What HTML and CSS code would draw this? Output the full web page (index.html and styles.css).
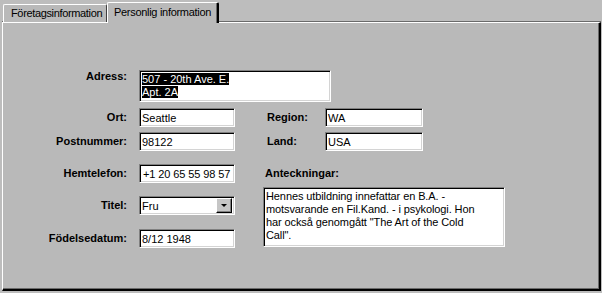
FILE: index.html
```html
<!DOCTYPE html>
<html>
<head>
    <meta charset="utf-8">
    <title>Personlig information</title>
    <link rel="stylesheet" href="styles.css">
</head>
<body>
<div class="tabs">
    <div class="tab">Företagsinformation</div>
    <div class="tab active">Personlig information</div>
</div>
<div class="panel">
    <div class="form">
        <div class="lbl r1">Adress:</div>
        <div class="edit area adress">
            <span class="sel">507 - 20th Ave. E.</span><br>
            <span class="sel">Apt. 2A</span>
        </div>

        <div class="lbl r2">Ort:</div>
        <div class="edit c3 r2">Seattle</div>
        <div class="lbl2 r2">Region:</div>
        <div class="edit c6 r2">WA</div>

        <div class="lbl r3">Postnummer:</div>
        <div class="edit c3 r3">98122</div>
        <div class="lbl2 r3">Land:</div>
        <div class="edit c6 r3">USA</div>

        <div class="lbl r4">Hemtelefon:</div>
        <div class="edit c3 r4 phone">+1 20 65 55 98 57</div>
        <div class="lbl2 notes-lbl r4">Anteckningar:</div>

        <div class="lbl r5 titel-lbl">Titel:</div>
        <div class="edit combo c3 r5">
            <span>Fru</span>
            <span class="drop"><i></i></span>
        </div>
        <div class="edit area notes">Hennes utbildning innefattar en B.A. -<br>motsvarande en Fil.Kand. - i psykologi. Hon<br>har också genomgått "The Art of the Cold<br>Call".</div>

        <div class="lbl r6">Födelsedatum:</div>
        <div class="edit c3 r6">8/12 1948</div>
    </div>
</div>
</body>
</html>
```

FILE: styles.css
```css
html, body {
    margin: 0;
    padding: 0;
}

body {
    width: 602px;
    height: 293px;
    overflow: hidden;
    background: #bdbdbd;
    color: #000;
    font: 11px/13px "Liberation Sans", Arial, sans-serif;
}

.tabs {
    display: flex;
    align-items: flex-end;
    height: 22px;
    padding-left: 3px;
    box-sizing: border-box;
}

.tab {
    box-sizing: border-box;
    height: 18px;
    width: 104px;
    padding: 2px 0 0 7px;
    background: #b9b9b9;
    border-top: 1px solid #fff;
    border-left: 1px solid #fff;
    border-right: 1px solid #404040;
    border-radius: 2px 2px 0 0;
    white-space: nowrap;
    letter-spacing: -0.35px;
    overflow: hidden;
}

.tab.active {
    position: relative;
    z-index: 1;
    width: 112px;
    height: 21px;
    margin-bottom: -1px;
    padding: 3px 0 0 6px;
    border-right: 2px solid #000;
    box-shadow: inset -1px 0 #6a6a6a;
    letter-spacing: -0.3px;
}

.panel {
    box-sizing: border-box;
    margin-left: 2px;
    width: 599px;
    height: 269px;
    background: #b9b9b9;
    border-top: 1px solid #fff;
    border-left: 1px solid #fff;
    border-right: 2px solid #000;
    border-bottom: 2px solid #000;
    box-shadow: inset -1px -1px #6a6a6a, 0 -1px #6a6a6a;
}

.form {
    display: grid;
    grid-template-columns: 124px 12px 96px 28px 62px 98px 82px;
    grid-template-rows: 38px 24px 32px 23px 42px 19px;
    padding-top: 47px;
    align-items: start;
}

.lbl, .lbl2 {
    font-weight: bold;
    line-height: 19px;
    white-space: nowrap;
}

.lbl {
    grid-column: 1;
    text-align: right;
}

.lbl.r1 {
    line-height: 13px;
}

.titel-lbl {
    margin-top: 9px;
}

.lbl2 {
    grid-column: 5;
    padding-left: 4px;
}

.notes-lbl {
    grid-column: 5 / span 2;
    padding-left: 2px;
}

.r1 { grid-row: 1; }
.r2 { grid-row: 2; }
.r3 { grid-row: 3; }
.r4 { grid-row: 4; }
.r5 { grid-row: 5; }
.r6 { grid-row: 6; }
.c3 { grid-column: 3; }
.c6 { grid-column: 6; }

.edit {
    box-sizing: border-box;
    height: 19px;
    background: #fff;
    border: 1px solid;
    border-color: #808080 #fff #fff #808080;
    box-shadow: inset 1px 1px #000, inset -1px -1px #d4d4d4;
    padding: 2px 2px 0 2px;
    line-height: 14px;
    white-space: nowrap;
    overflow: hidden;
}

.phone {
    letter-spacing: -0.1px;
    padding-left: 3px;
}

.area {
    line-height: 13px;
    padding: 2px 2px 0 2px;
}

.adress {
    grid-column: 3 / span 4;
    grid-row: 1;
    width: 192px;
    height: 32px;
}

.sel {
    background: #000;
    color: #fff;
}

.notes {
    grid-column: 5 / span 3;
    grid-row: 5 / span 2;
    height: 60px;
    letter-spacing: -0.1px;
}

.combo {
    display: flex;
    justify-content: space-between;
    margin-top: 9px;
    padding: 2px 2px 0 2px;
}

.drop {
    box-sizing: border-box;
    width: 16px;
    height: 15px;
    margin-top: -1px;
    background: #c6c6c6;
    border-top: 1px solid #fff;
    border-left: 1px solid #fff;
    border-right: 1px solid #000;
    border-bottom: 1px solid #000;
    box-shadow: inset -1px -1px #808080;
    display: flex;
    align-items: center;
    justify-content: center;
}

.drop i {
    width: 0;
    height: 0;
    border-left: 3px solid transparent;
    border-right: 3px solid transparent;
    border-top: 3px solid #000;
}
```
